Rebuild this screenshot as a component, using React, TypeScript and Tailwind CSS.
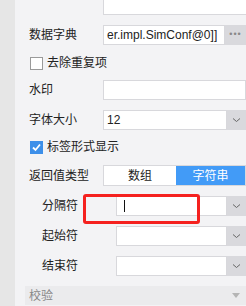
import React from 'react';

const font = { fontFamily: '"Liberation Sans", "Noto Sans CJK SC", sans-serif' };

function Chevron() {
  return (
    <svg width="9" height="6" viewBox="0 0 9 6" className="text-[#666]">
      <path d="M1 1.5 L4.5 4.5 L8 1.5" fill="none" stroke="currentColor" strokeWidth="1" />
    </svg>
  );
}

function SelectBox({ value = '', cursor = false }: { value?: string; cursor?: boolean }) {
  return (
    <div className="flex flex-1 h-[20px]">
      <div className="flex flex-1 items-center bg-white border border-[#d8d8dc] px-[3px] text-[12px] text-[#222]">
        {value}
        {cursor && <span className="ml-[4px] w-px h-[12px] bg-[#111]" />}
      </div>
      <div className="w-[19px] bg-[#d9d9dd] flex items-center justify-center">
        <Chevron />
      </div>
    </div>
  );
}

function Row({ label, sub = false, children }: { label: string; sub?: boolean; children: React.ReactNode }) {
  return (
    <div className={`flex items-center h-[20px] mt-[10px] ${sub ? 'pl-[27px]' : 'pl-[14px]'}`}>
      <div className="w-[74px] shrink-0 text-[12px] text-[#222]">{label}</div>
      {children}
    </div>
  );
}

export default function App() {
  return (
    <div className="w-[246px] h-[306px] flex overflow-hidden" style={font}>
      <div className="w-[15px] bg-[#e6e6e6]" />
      <div className="flex-1 bg-[#f3f3f5] flex flex-col relative">
        <div className="h-[15px] ml-[88px] bg-white border-l border-b border-[#d8d8dc]" />

        <Row label="数据字典">
          <div className="flex flex-1 h-[20px]">
            <div className="flex-1 bg-white border border-[#d8d8dc] px-[3px] flex items-center text-[12px] text-[#222] overflow-hidden whitespace-nowrap">
              er.impl.SimConf@0]]
            </div>
            <div className="w-[21px] bg-[#d9d9dd] flex items-center justify-center text-[9px] text-[#888] tracking-[1px]">
              •••
            </div>
          </div>
        </Row>

        <div className="flex items-center h-[14px] mt-[11px] pl-[15px]">
          <div className="w-[13px] h-[13px] bg-white border border-[#9a9a9a]" />
          <span className="ml-[4px] text-[12px] text-[#222]">去除重复项</span>
        </div>

        <Row label="水印">
          <div className="flex-1 h-[20px] bg-white border border-[#d8d8dc]" />
        </Row>

        <Row label="字体大小">
          <SelectBox value="12" />
        </Row>

        <div className="flex items-center h-[14px] mt-[10px] pl-[15px]">
          <div className="w-[13px] h-[13px] bg-[#3d8fe9] flex items-center justify-center">
            <svg width="11" height="11" viewBox="0 0 11 11">
              <path d="M2 5.5 L4.5 8 L9 2.5" fill="none" stroke="white" strokeWidth="1.8" />
            </svg>
          </div>
          <span className="ml-[4px] text-[12px] text-[#222]">标签形式显示</span>
        </div>

        <div className="flex items-center h-[21px] mt-[11px] pl-[14px]">
          <div className="w-[74px] shrink-0 text-[12px] text-[#222]">返回值类型</div>
          <div className="flex flex-1 h-[21px] border border-[#d8d8dc]">
            <div className="w-[72px] bg-white flex items-center justify-center text-[12px] text-[#222]">数组</div>
            <div className="flex-1 bg-[#429bf7] flex items-center justify-center text-[12px] text-white">字符串</div>
          </div>
        </div>

        <Row label="分隔符" sub>
          <SelectBox cursor />
        </Row>

        <Row label="起始符" sub>
          <SelectBox />
        </Row>

        <Row label="结束符" sub>
          <SelectBox />
        </Row>

        <div className="mt-[10px] ml-[10px] h-[19px] bg-[#ebebed] flex items-center justify-between pl-[4px] pr-[6px]">
          <span className="text-[12px] text-[#888]">校验</span>
          <svg width="8" height="5" viewBox="0 0 8 5">
            <path d="M0 0 L8 0 L4 5 Z" fill="#b5b5b5" />
          </svg>
        </div>

        <div className="absolute left-[68px] top-[194px] w-[117px] h-[30px] border-[3px] border-[#f5211f] rounded-[3px]" />
      </div>
    </div>
  );
}
